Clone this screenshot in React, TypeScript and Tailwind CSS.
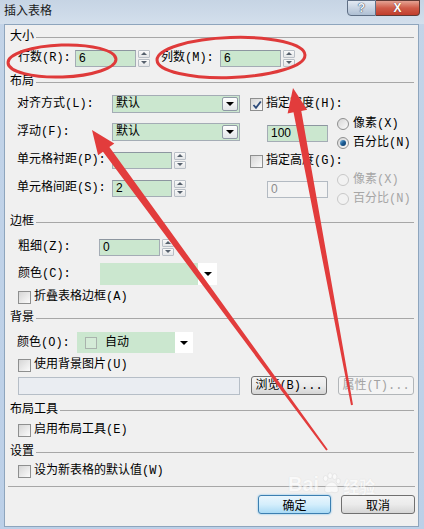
import React from "react";

const Check = ({ checked = false, disabled = false }: { checked?: boolean; disabled?: boolean }) => (
  <div
    className={
      "relative w-[13px] h-[13px] shrink-0 border " +
      (disabled ? "border-[#c2c2c2] bg-[#f4f4f4]" : "border-[#8e8f8f] bg-gradient-to-br from-[#d6d6d6] to-[#fbfbfb]")
    }
  >
    {checked && (
      <svg className="absolute left-[1px] top-[1px]" width="10" height="10" viewBox="0 0 10 10">
        <path d="M1.5 5 L4 7.8 L8.8 1.5" fill="none" stroke="#2b4a7a" strokeWidth="1.8" />
      </svg>
    )}
  </div>
);

const Radio = ({ on = false, disabled = false }: { on?: boolean; disabled?: boolean }) => (
  <div
    className={
      "flex items-center justify-center w-[12px] h-[12px] rounded-full shrink-0 border " +
      (disabled ? "border-[#c8c8c8] bg-[#f2f2f2]" : "border-[#8e8f8f] bg-gradient-to-br from-[#d6d6d6] to-[#fbfbfb]")
    }
  >
    {on && <div className="w-[6px] h-[6px] rounded-full bg-gradient-to-br from-[#7fc0e8] via-[#1c5d96] to-[#0d3a66]" />}
  </div>
);

const Spin = () => (
  <div className="flex flex-col gap-[1px] w-[12px] h-[17px] ml-[2px]">
    <div className="flex-1 flex items-center justify-center border border-[#b9bfc6] rounded-[1px] bg-gradient-to-b from-[#fafafa] to-[#e4e6e8]">
      <div className="w-0 h-0 border-x-[3px] border-x-transparent border-b-[3px] border-b-[#56606c]" />
    </div>
    <div className="flex-1 flex items-center justify-center border border-[#b9bfc6] rounded-[1px] bg-gradient-to-b from-[#fafafa] to-[#e4e6e8]">
      <div className="w-0 h-0 border-x-[3px] border-x-transparent border-t-[3px] border-t-[#56606c]" />
    </div>
  </div>
);

const GreenInput = ({ value, w = "w-[61px]" }: { value: string; w?: string }) => (
  <div
    className={
      w +
      " h-[17px] flex items-center pl-[3px] border border-[#a4acb5] border-t-[#8d96a0] bg-[#cbe7cf] font-['Liberation_Sans',sans-serif] text-[12px] text-black"
    }
  >
    {value}
  </div>
);

const DisabledInput = ({ value }: { value: string }) => (
  <div className="w-[61px] h-[17px] flex items-center pl-[3px] border border-[#b3bac2] bg-[#f3f3f3] font-['Liberation_Sans',sans-serif] text-[12px] text-[#8c8c8c]">
    {value}
  </div>
);

const Dropdown = ({ value }: { value: string }) => (
  <div className="w-[128px] h-[18px] flex items-center justify-between border border-[#a4acb5] bg-[#cbe7cf] pl-[3px] pr-[1px]">
    <span>{value}</span>
    <div className="w-[16px] h-[14px] flex items-center justify-center border border-[#8f99a5] rounded-[2px] bg-gradient-to-b from-[#ffffff] to-[#e2e5e8]">
      <div className="w-0 h-0 border-x-[4px] border-x-transparent border-t-[4px] border-t-black" />
    </div>
  </div>
);

const Header = ({ title, mt }: { title: string; mt: string }) => (
  <div className={"flex items-center h-[16px] " + mt}>
    <span className="pl-[5px] pr-[2px] leading-none">{title}</span>
    <div className="flex-1 h-px bg-[#a7a7a7] mr-[4px]" />
  </div>
);

const CheckRow = ({ label, mt }: { label: string; mt: string }) => (
  <div className={"flex items-center h-[16px] pl-[13px] gap-[3px] " + mt}>
    <Check />
    <span className="leading-none">{label}</span>
  </div>
);

const Btn = ({ label, kind = "normal", w }: { label: string; kind?: "normal" | "default" | "disabled"; w: string }) => {
  const cls =
    kind === "default"
      ? "border-[#3c7fb1] bg-gradient-to-b from-[#eaf6fd] via-[#d4eefc] to-[#a9daf5] shadow-[0_0_2px_#5fb6ea] text-black"
      : kind === "disabled"
      ? "border-[#b2b6b9] bg-[#f4f4f4] text-[#a3a3a3]"
      : "border-[#707070] bg-gradient-to-b from-[#f3f3f3] via-[#ebebeb] to-[#d5d5d5] text-black";
  return (
    <div className={w + " h-[19px] flex items-center justify-center rounded-[3px] border leading-none " + cls}>{label}</div>
  );
};

export default function App() {
  return (
    <div className="relative w-[424px] h-[529px] overflow-hidden flex flex-col bg-gradient-to-b from-[#c3d4e8] to-[#bcd0e8] font-['Liberation_Mono','Noto_Sans_CJK_SC',monospace] text-[12px] text-black">
      {/* title bar */}
      <div className="h-[24px] flex items-start justify-between bg-gradient-to-b from-[#c6d4e4] to-[#d3dfec]">
        <span className="pl-[4px] pt-[3px] font-['Noto_Sans_CJK_SC',sans-serif] text-[12px] leading-[14px] text-[#1a1a1a]">插入表格</span>
        <div className="flex mr-[4px]">
          <div className="w-[29px] h-[16px] flex items-center justify-center rounded-bl-[4px] border border-[#5f6f85] bg-gradient-to-b from-[#e2e9f2] to-[#aebfd3] font-['Liberation_Sans',sans-serif] font-bold text-[12px] leading-none text-[#f2f5f9] [text-shadow:0_0_1px_#2a3a50,0_0_1px_#2a3a50]">
            ?
          </div>
          <div className="w-[44px] h-[16px] flex items-center justify-center rounded-br-[4px] border border-l-0 border-[#5f3a35] bg-gradient-to-b from-[#e4a293] via-[#cf5b48] to-[#c13d2c] font-['Liberation_Sans',sans-serif] font-bold text-[12px] leading-none text-white [text-shadow:0_0_1px_#5a1a10]">
            X
          </div>
        </div>
      </div>

      {/* client panel */}
      <div className="ml-[4px] w-[415px] h-[503px] border border-[#8ea5bd] bg-[#f0f0f0] flex flex-col">
        <Header title="大小" mt="mt-[4px]" />
        <div className="flex items-center h-[18px] mt-[4px] pl-[13px]">
          <span className="w-[57px] leading-none">行数(R):</span>
          <GreenInput value="6" />
          <Spin />
          <span className="ml-[11px] w-[59px] leading-none">列数(M):</span>
          <GreenInput value="6" />
          <Spin />
        </div>

        <Header title="布局" mt="mt-[7px]" />
        <div className="flex mt-[4px]">
          <div className="flex flex-col gap-[8px] pl-[12px]">
            <div className="flex items-center h-[20px]">
              <span className="w-[95px] leading-none">对齐方式(L):</span>
              <Dropdown value="默认" />
            </div>
            <div className="flex items-center h-[20px]">
              <span className="w-[95px] leading-none">浮动(F):</span>
              <Dropdown value="默认" />
            </div>
            <div className="flex items-center h-[20px]">
              <span className="w-[95px] leading-none">单元格衬距(P):</span>
              <GreenInput value="" w="w-[60px]" />
              <Spin />
            </div>
            <div className="flex items-center h-[20px]">
              <span className="w-[95px] leading-none">单元格间距(S):</span>
              <GreenInput value="2" w="w-[60px]" />
              <Spin />
            </div>
          </div>
          <div className="flex flex-col ml-[10px]">
            <div className="flex items-center h-[20px] gap-[3px]">
              <Check checked />
              <span className="leading-none">指定宽度(H):</span>
            </div>
            <div className="flex items-center h-[38px] pl-[17px]">
              <GreenInput value="100" />
              <div className="flex flex-col ml-[9px]">
                <div className="flex items-center h-[19px] gap-[4px]">
                  <Radio />
                  <span className="leading-none">像素(X)</span>
                </div>
                <div className="flex items-center h-[19px] gap-[4px]">
                  <Radio on />
                  <span className="leading-none">百分比(N)</span>
                </div>
              </div>
            </div>
            <div className="flex items-center h-[18px] gap-[3px]">
              <Check />
              <span className="leading-none">指定高度(G):</span>
            </div>
            <div className="flex items-center h-[38px] pl-[17px]">
              <DisabledInput value="0" />
              <div className="flex flex-col ml-[9px] text-[#a6a6a6]">
                <div className="flex items-center h-[19px] gap-[4px]">
                  <Radio disabled />
                  <span className="leading-none">像素(X)</span>
                </div>
                <div className="flex items-center h-[19px] gap-[4px]">
                  <Radio disabled />
                  <span className="leading-none">百分比(N)</span>
                </div>
              </div>
            </div>
          </div>
        </div>

        <Header title="边框" mt="mt-[6px]" />
        <div className="flex items-center h-[18px] mt-[8px] pl-[13px]">
          <span className="w-[81px] leading-none">粗细(Z):</span>
          <GreenInput value="0" />
          <Spin />
        </div>
        <div className="flex items-center h-[22px] mt-[7px] pl-[13px]">
          <span className="w-[82px] leading-none">颜色(C):</span>
          <div className="flex h-[22px] w-[117px] bg-white">
            <div className="w-[98px] h-full bg-[#cbe7cf]" />
            <div className="flex-1 flex items-center justify-center">
              <div className="w-0 h-0 border-x-[4px] border-x-transparent border-t-[4px] border-t-black" />
            </div>
          </div>
        </div>
        <CheckRow label="折叠表格边框(A)" mt="mt-[4px]" />

        <Header title="背景" mt="mt-[5px]" />
        <div className="flex items-center h-[21px] mt-[6px] pl-[12px]">
          <span className="w-[60px] leading-none">颜色(O):</span>
          <div className="flex h-[21px] w-[116px] bg-white">
            <div className="w-[98px] h-full bg-[#cbe7cf] flex items-center pl-[8px]">
              <div className="w-[12px] h-[12px] border border-[#a9b3ad] bg-[#d4ebd7]" />
              <span className="ml-[8px] leading-none">自动</span>
            </div>
            <div className="flex-1 flex items-center justify-center">
              <div className="w-0 h-0 border-x-[4px] border-x-transparent border-t-[4px] border-t-black" />
            </div>
          </div>
        </div>
        <CheckRow label="使用背景图片(U)" mt="mt-[4px]" />
        <div className="flex items-center h-[19px] mt-[3px] pl-[13px]">
          <div className="w-[222px] h-[18px] border border-[#b6bec7] bg-[#eaedf2]" />
          <div className="ml-[11px]">
            <Btn label="浏览(B)..." w="w-[76px]" />
          </div>
          <div className="ml-[11px]">
            <Btn label="属性(T)..." kind="disabled" w="w-[76px]" />
          </div>
        </div>

        <Header title="布局工具" mt="mt-[7px]" />
        <CheckRow label="启用布局工具(E)" mt="mt-[4px]" />
        <Header title="设置" mt="mt-[6px]" />
        <CheckRow label="设为新表格的默认值(W)" mt="mt-[3px]" />
        <div className="h-px bg-[#a7a7a7] mt-[7px] mx-[3px]" />
        <div className="flex justify-end gap-[10px] mt-[8px] pr-[3px] font-['Noto_Sans_CJK_SC',sans-serif]">
          <Btn label="确定" kind="default" w="w-[73px]" />
          <Btn label="取消" w="w-[74px]" />
        </div>
      </div>

      {/* Baidu watermark */}
      <div className="absolute left-[288px] top-[472px] flex items-end gap-[2px] pointer-events-none opacity-60">
        <span className="font-['Liberation_Sans',sans-serif] font-bold text-[20px] leading-none text-white [text-shadow:0_0_1px_#c8c8c8]">Bai</span>
        <svg width="20" height="22" viewBox="0 0 22 24">
          <g fill="#ffffff" stroke="#cfcfcf" strokeWidth="0.6">
            <ellipse cx="5" cy="7" rx="2.5" ry="3.2" />
            <ellipse cx="10" cy="4" rx="2.5" ry="3.2" />
            <ellipse cx="15" cy="5" rx="2.5" ry="3.2" />
            <ellipse cx="19" cy="10" rx="2.3" ry="3" />
            <path d="M4 20 C4 14 9 11 12 11 C16 11 19 16 19 20 C19 23 15 23 12 22 C9 23 4 23 4 20 Z" />
          </g>
        </svg>
        <span className="font-['Noto_Sans_CJK_SC',sans-serif] font-bold text-[16px] leading-none text-white [text-shadow:0_0_1px_#c8c8c8]">经验</span>
      </div>

      {/* red annotations */}
      <svg className="absolute left-0 top-0 pointer-events-none" width="424" height="529" viewBox="0 0 424 529">
        <ellipse cx="62" cy="61" rx="54" ry="16" fill="none" stroke="#df3a3a" strokeWidth="3" transform="rotate(-2 62 61)" />
        <ellipse cx="231" cy="57.5" rx="74" ry="20" fill="none" stroke="#df3a3a" strokeWidth="3" transform="rotate(-2 231 57.5)" />
        <polygon
          points="92,130 114.3,143.4 109.4,146.9 327.8,449.4 326.2,450.6 103.0,151.7 98.1,155.2"
          fill="#e23c3c"
        />
        <polygon
          points="293,88 307.2,109.8 301.3,110.9 353,404.8 351,405.2 293.5,112.3 287.6,113.4"
          fill="#e23c3c"
        />
      </svg>
    </div>
  );
}
